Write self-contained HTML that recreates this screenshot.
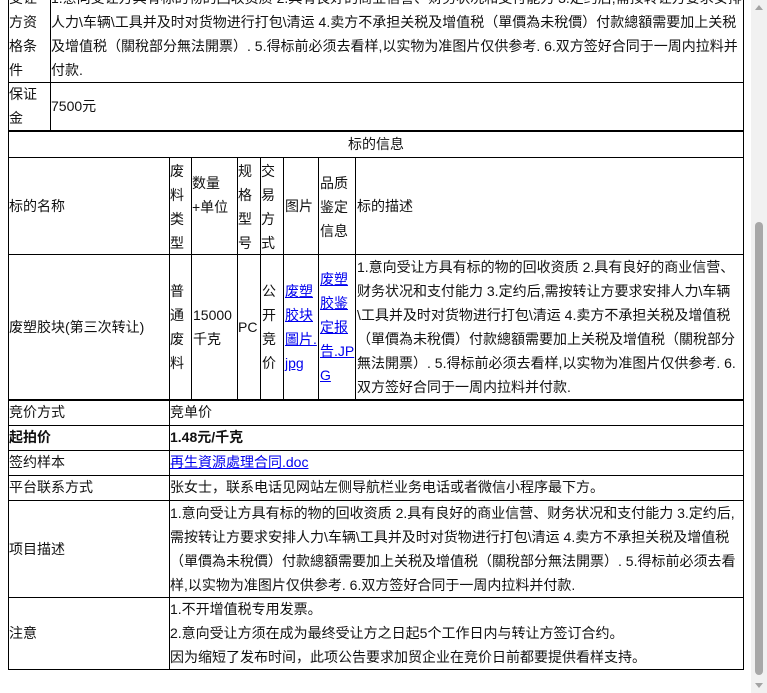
<!DOCTYPE html>
<html><head><meta charset="utf-8"><style>
body{margin:0;width:767px;height:693px;overflow:hidden;background:#fff;position:relative;font-family:"Liberation Sans","Noto Sans CJK SC",sans-serif;font-size:14px;color:#111}
.h{position:absolute;height:1px;background:#000}
.v{position:absolute;width:1px;background:#000}
.t{position:absolute;line-height:24px;white-space:nowrap}
a{color:#00e;text-decoration:underline}
</style></head><body>
<div class="v" style="left:8px;top:0;height:670px"></div>
<div class="v" style="left:743px;top:0;height:670px"></div>
<div class="v" style="left:50px;top:0;height:130px"></div>
<div class="h" style="left:8px;width:736px;top:82px"></div>
<div class="h" style="left:8px;width:736px;top:130px;height:2px"></div>
<div class="h" style="left:8px;width:736px;top:157px"></div>
<div class="h" style="left:8px;width:736px;top:254px"></div>
<div class="h" style="left:8px;width:736px;top:399px;height:2px"></div>
<div class="v" style="left:169px;top:157px;height:513px"></div>
<div class="v" style="left:191px;top:157px;height:243px"></div>
<div class="v" style="left:237px;top:157px;height:243px"></div>
<div class="v" style="left:260px;top:157px;height:243px"></div>
<div class="v" style="left:283px;top:157px;height:243px"></div>
<div class="v" style="left:318px;top:157px;height:243px"></div>
<div class="v" style="left:355px;top:157px;height:243px"></div>
<div class="h" style="left:8px;width:736px;top:425px"></div>
<div class="h" style="left:8px;width:736px;top:450px"></div>
<div class="h" style="left:8px;width:736px;top:475px"></div>
<div class="h" style="left:8px;width:736px;top:500px"></div>
<div class="h" style="left:8px;width:736px;top:597px"></div>
<div class="h" style="left:8px;width:736px;top:669px"></div>

<div class="t" style="left:9px;top:-14px">受让<br>方资<br>格条<br>件</div>
<div class="t" style="left:51px;top:-14px">1.意向受让方具有标的物的回收资质 2.具有良好的商业信誉、财务状况和支付能力 3.定约后,需按转让方要求安排<br>人力\车辆\工具并及时对货物进行打包\清运 4.卖方不承担关税及增值税（單價為未稅價）付款總額需要加上关税<br>及增值税（關稅部分無法開票）. 5.得标前必须去看样,以实物为准图片仅供参考. 6.双方签好合同于一周内拉料并<br>付款.</div>
<div class="t" style="left:9px;top:82px">保证<br>金</div>
<div class="t" style="left:51px;top:94px">7500元</div>
<div class="t" style="left:8px;width:736px;text-align:center;top:132px">标的信息</div>

<div class="t" style="left:9px;top:194px">标的名称</div>
<div class="t" style="left:170px;top:159px">废<br>料<br>类<br>型</div>
<div class="t" style="left:192px;top:171px">数量<br>+单位</div>
<div class="t" style="left:238px;top:159px">规<br>格<br>型<br>号</div>
<div class="t" style="left:261px;top:159px">交<br>易<br>方<br>式</div>
<div class="t" style="left:285px;top:194px">图片</div>
<div class="t" style="left:320px;top:171px">品质<br>鉴定<br>信息</div>
<div class="t" style="left:357px;top:194px">标的描述</div>

<div class="t" style="left:9px;top:315px">废塑胶块(第三次转让)</div>
<div class="t" style="left:170px;top:279px">普<br>通<br>废<br>料</div>
<div class="t" style="left:193px;top:303px">15000<br>千克</div>
<div class="t" style="left:238px;top:315px">PC</div>
<div class="t" style="left:262px;top:279px">公<br>开<br>竞<br>价</div>
<div class="t" style="left:285px;top:279px"><a>废塑<br>胶块<br>圖片.<br>jpg</a></div>
<div class="t" style="left:320px;top:267px"><a>废塑<br>胶鉴<br>定报<br>告.JP<br>G</a></div>
<div class="t" style="left:357px;top:255px">1.意向受让方具有标的物的回收资质 2.具有良好的商业信营、<br>财务状况和支付能力 3.定约后,需按转让方要求安排人力\车辆<br>\工具并及时对货物进行打包\清运 4.卖方不承担关税及增值税<br>（單價為未稅價）付款總額需要加上关税及增值税（關稅部分<br>無法開票）. 5.得标前必须去看样,以实物为准图片仅供参考. 6.<br>双方签好合同于一周内拉料并付款.</div>

<div class="t" style="left:9px;top:400px">竞价方式</div>
<div class="t" style="left:170px;top:400px">竞单价</div>
<div class="t" style="left:9px;top:425px;font-weight:bold">起拍价</div>
<div class="t" style="left:170px;top:425px;font-weight:bold">1.48元/千克</div>
<div class="t" style="left:9px;top:450px">签约样本</div>
<div class="t" style="left:170px;top:450px"><a>再生資源處理合同.doc</a></div>
<div class="t" style="left:9px;top:475px">平台联系方式</div>
<div class="t" style="left:170px;top:475px">张女士，联系电话见网站左侧导航栏业务电话或者微信小程序最下方。</div>
<div class="t" style="left:9px;top:537px">项目描述</div>
<div class="t" style="left:170px;top:501px">1.意向受让方具有标的物的回收资质 2.具有良好的商业信营、财务状况和支付能力 3.定约后,<br>需按转让方要求安排人力\车辆\工具并及时对货物进行打包\清运 4.卖方不承担关税及增值税<br>（單價為未稅價）付款總額需要加上关税及增值税（關稅部分無法開票）. 5.得标前必须去看<br>样,以实物为准图片仅供参考. 6.双方签好合同于一周内拉料并付款.</div>
<div class="t" style="left:9px;top:621px">注意</div>
<div class="t" style="left:170px;top:597px">1.不开增值税专用发票。<br>2.意向受让方须在成为最终受让方之日起5个工作日内与转让方签订合约。<br>因为缩短了发布时间，此项公告要求加贸企业在竞价日前都要提供看样支持。</div>

<div style="position:absolute;left:751px;top:0;width:16px;height:693px;background:#f1f1f1"></div>
<div style="position:absolute;left:755px;top:222px;width:8px;height:453px;background:#a8a8a8;border-radius:4px"></div>
<div style="position:absolute;left:755px;top:5px;width:0;height:0;border-left:4px solid transparent;border-right:4px solid transparent;border-bottom:5px solid #a3a3a3"></div>
<div style="position:absolute;left:755px;top:683px;width:0;height:0;border-left:4px solid transparent;border-right:4px solid transparent;border-top:5px solid #a3a3a3"></div>
</body></html>
